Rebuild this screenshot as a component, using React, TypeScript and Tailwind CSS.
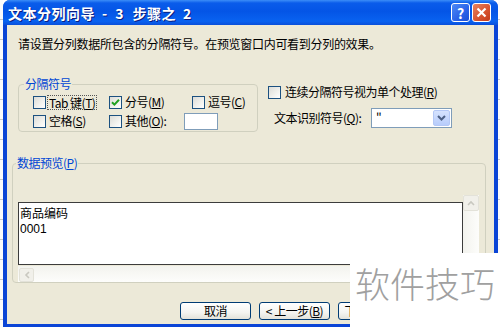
import React from "react";

const Check = ({ checked = false }: { checked?: boolean }) => (
  <span className="w-[13px] h-[13px] shrink-0 border border-[#1C5180] bg-[linear-gradient(135deg,#DCDCD7_0%,#F2F2EE_60%,#FFFFFF_100%)] flex items-center justify-center">
    {checked && (
      <svg width="9" height="9" viewBox="0 0 9 9">
        <path d="M1 4.2 L3.4 6.6 L8 1.8" fill="none" stroke="#21A121" strokeWidth="2" />
      </svg>
    )}
  </span>
);

const U = ({ c }: { c: string }) => <span className="underline underline-offset-[1px]">{c}</span>;

const Btn = ({ children }: { children: React.ReactNode }) => (
  <div className="w-[71px] h-[18px] shrink-0 overflow-hidden whitespace-nowrap rounded-[3px] border border-[#003C74] bg-[linear-gradient(to_bottom,#FFFFFF_0%,#F4F4F0_60%,#E3E2DA_100%)] flex items-center justify-center text-[12px] tracking-[-0.5px] text-black">
    {children}
  </div>
);

export default function App() {
  return (
    <div className="w-[500px] h-[328px] relative overflow-hidden flex bg-white font-['Noto_Sans_CJK_SC','Noto_Sans',sans-serif] text-black">
      <div className="w-[3px] h-full bg-[repeating-linear-gradient(to_bottom,#fbfbfb_0,#fbfbfb_19px,#c9c9c9_19px,#c9c9c9_20px)]" />
      <div className="w-[495px] h-[327px] flex flex-col rounded-t-[7px] bg-[#0A44D6] overflow-hidden">
        {/* title bar */}
        <div className="h-[25px] shrink-0 flex items-center pl-[5px] pr-[7px] bg-[linear-gradient(to_bottom,#3C8EF8_0%,#0A5CEA_12%,#0455E6_45%,#0962F0_85%,#0A4FDA_100%)]">
          <div className="flex items-center text-white font-bold text-[14px] leading-none [text-shadow:1px_1px_0_#0A1E80] whitespace-nowrap">
            <span className="tracking-[0.5px]">文本分列向导</span>
            <span className="ml-[7px]">-</span>
            <span className="ml-[8px]">3</span>
            <span className="ml-[9px] tracking-[0.5px]">步骤之</span>
            <span className="ml-[7px]">2</span>
          </div>
          <div className="ml-auto flex gap-[2px]">
            <div className="w-[19px] h-[19px] rounded-[3px] border border-white bg-[linear-gradient(135deg,#4D8BF5_0%,#2A62E8_60%,#1B4FD6_100%)] flex items-center justify-center text-white font-bold text-[14px] leading-none">?</div>
            <div className="w-[19px] h-[19px] rounded-[3px] border border-white bg-[linear-gradient(135deg,#E7835F_0%,#D6522E_60%,#C33A1B_100%)] flex items-center justify-center">
              <svg width="11" height="11" viewBox="0 0 11 11">
                <path d="M1.5 1.5 L9.5 9.5 M9.5 1.5 L1.5 9.5" stroke="#fff" strokeWidth="2.2" />
              </svg>
            </div>
          </div>
        </div>
        {/* body */}
        <div className="flex-1 mx-[4px] mb-[3px] bg-[#ECE9D8] flex flex-col text-[12px] tracking-[-0.5px]">
          <div className="mt-[11px] pl-[11px] leading-[16px] tracking-[-0.3px]">请设置分列数据所包含的分隔符号。在预览窗口内可看到分列的效果。</div>

          <div className="mt-[25px] flex items-start">
            <fieldset className="ml-[11px] w-[240px] border border-[#D0D0BF] rounded-[4px] pb-[1px]">
              <legend className="ml-[5px] px-[1px] leading-[14px] text-[#0046D5]">分隔符号</legend>
              <div className="flex flex-col gap-[2px] pl-[14px] pt-[3px]">
                <div className="h-[16px] flex items-center">
                  <div className="w-[76px] flex items-center gap-[1px]">
                    <Check />
                    <span className="border border-dotted border-[#555] px-[1px] leading-[13px] whitespace-pre">Tab 键(<U c="T" />)</span>
                  </div>
                  <div className="w-[83px] flex items-center gap-[3px]">
                    <Check checked />
                    <span>分号(<U c="M" />)</span>
                  </div>
                  <div className="flex items-center gap-[3px]">
                    <Check />
                    <span>逗号(<U c="C" />)</span>
                  </div>
                </div>
                <div className="h-[18px] flex items-center">
                  <div className="w-[76px] flex items-center gap-[3px]">
                    <Check />
                    <span>空格(<U c="S" />)</span>
                  </div>
                  <div className="w-[75px] flex items-center gap-[3px]">
                    <Check />
                    <span>其他(<U c="O" />):</span>
                  </div>
                  <div className="w-[34px] h-[17px] border border-[#7F9DB9] bg-white" />
                </div>
              </div>
            </fieldset>

            <div className="ml-[10px] mt-[7px] flex flex-col">
              <div className="h-[16px] flex items-center gap-[4px]">
                <Check />
                <span>连续分隔符号视为单个处理(<U c="R" />)</span>
              </div>
              <div className="mt-[8px] h-[20px] flex items-center pl-[6px]">
                <span className="w-[97px]">文本识别符号(<U c="Q" />):</span>
                <div className="w-[81px] h-[20px] border border-[#7F9DB9] bg-white flex items-center">
                  <span className="pl-[4px] text-[12px] leading-none self-start pt-[2px]">"</span>
                  <div className="ml-auto mr-[1px] w-[17px] h-[16px] rounded-[2px] border border-[#B4C8F6] bg-[linear-gradient(to_bottom,#D6E3FE_0%,#B7CCFB_100%)] flex items-center justify-center">
                    <svg width="9" height="6" viewBox="0 0 9 6">
                      <path d="M1 1 L4.5 4.5 L8 1" fill="none" stroke="#4D6185" strokeWidth="2" />
                    </svg>
                  </div>
                </div>
              </div>
            </div>
          </div>

          <fieldset className="mt-[24px] ml-[5px] w-[474px] border border-[#D0D0BF] rounded-[4px]">
            <legend className="ml-[3px] px-[1px] leading-[14px] text-[#0046D5]">数据预览(<U c="P" />)</legend>
            <div className="mt-[25px] ml-[5px] flex">
              <div className="w-[445px] flex flex-col pt-[7px]">
                <div className="h-[63px] border border-[#3C3C3C] bg-white pl-[1px] pt-[2px] leading-[16px] tracking-normal">
                  <div>商品编码</div>
                  <div className="font-['Liberation_Sans',sans-serif] text-[12px]">0001</div>
                </div>
                <div className="mt-[1px] h-[16px] bg-[linear-gradient(to_bottom,#F3F3EE,#FDFDFB)] flex items-end pl-[1px]">
                  <div className="w-[15px] h-[14px] rounded-[2px] border border-[#E3E2D9] bg-[#F1F0EA] flex items-center justify-center">
                    <svg width="6" height="8" viewBox="0 0 6 8">
                      <path d="M5 1 L2 4 L5 7" fill="none" stroke="#C9C8C0" strokeWidth="1.6" />
                    </svg>
                  </div>
                </div>
              </div>
              <div className="w-[16px] h-[72px] bg-[linear-gradient(to_right,#F3F3EE,#FDFDFB)] flex flex-col">
                <div className="w-[16px] h-[16px] rounded-[2px] border border-[#E3E2D9] bg-[#F1F0EA] flex items-center justify-center">
                  <svg width="8" height="6" viewBox="0 0 8 6">
                    <path d="M1 5 L4 2 L7 5" fill="none" stroke="#C9C8C0" strokeWidth="1.6" />
                  </svg>
                </div>
              </div>
            </div>
          </fieldset>

          <div className="mt-[19px] pl-[173px] flex gap-[8px]">
            <Btn>取消</Btn>
            <Btn>
              <span>&lt; 上一步(<U c="B" />)</span>
            </Btn>
            <Btn>
              <span>下一步(<U c="N" />) &gt;</span>
            </Btn>
          </div>
        </div>
      </div>
      <div className="flex-1 h-full bg-[repeating-linear-gradient(to_bottom,#fbfbfb_0,#fbfbfb_19px,#c9c9c9_19px,#c9c9c9_20px)]" />

      <div className="absolute left-[350px] top-[253px] w-[150px] h-[75px] bg-white flex items-start justify-center pt-[12px]">
        <span className="text-[35px] leading-none text-[#A0A0A0] tracking-[0px] font-['Noto_Sans_CJK_SC',sans-serif] font-light">软件技巧</span>
      </div>
    </div>
  );
}
